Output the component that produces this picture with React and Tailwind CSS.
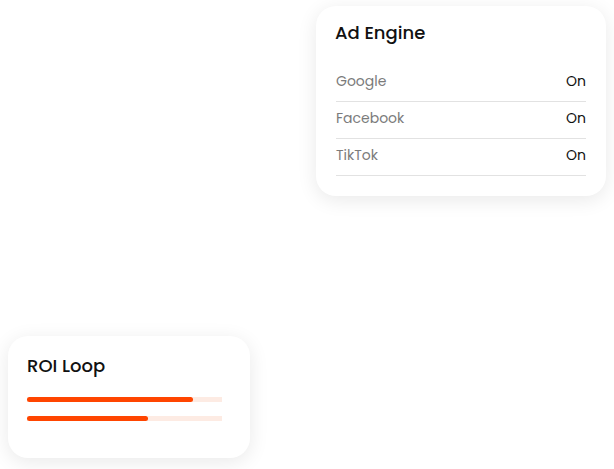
export default function App() {
  const rows = [
    { name: "Google", value: "On" },
    { name: "Facebook", value: "On" },
    { name: "TikTok", value: "On" },
  ];

  return (
    <div
      className="w-[614px] h-[469px] bg-white flex flex-col"
      style={{ fontFamily: "Poppins, Inter, 'Noto Sans', sans-serif" }}
    >
      <div className="flex justify-end pr-[8px] pt-[6px]">
        {/* Ad Engine card */}
        <div className="w-[290px] h-[190px] rounded-[20px] bg-white shadow-[0_4px_20px_rgba(0,0,0,0.09)] pl-[19px] pr-[20px] pt-[13px]">
          <h3 className="text-[18px] leading-[28px] font-medium text-[#111]">
            Ad Engine
          </h3>
          <div className="mt-[18px] pl-[1px]">
            {rows.map((r) => (
              <div
                key={r.name}
                className="flex justify-between items-center pt-[6px] pb-[10px] border-b border-[#e2e2e2] text-[14px] leading-[20px]"
              >
                <span className="text-[#7b7b7b]">{r.name}</span>
                <span className="text-[#111]">{r.value}</span>
              </div>
            ))}
          </div>
        </div>
      </div>

      <div className="pl-[8px] mt-[140px]">
        {/* ROI Loop card */}
        <div className="w-[242px] h-[122px] rounded-[20px] bg-white shadow-[0_4px_20px_rgba(0,0,0,0.09)] pl-[19px] pt-[16px]">
          <h3 className="text-[18px] leading-[28px] font-medium text-[#111]">
            ROI Loop
          </h3>
          <div className="mt-[17px] flex flex-col gap-[14px] w-[195px]">
            <div className="h-[5px] bg-[#fdebe3]">
              <div className="h-full w-[85%] rounded-full bg-[#ff4500]" />
            </div>
            <div className="h-[5px] bg-[#fdebe3]">
              <div className="h-full w-[62%] rounded-full bg-[#ff4500]" />
            </div>
          </div>
        </div>
      </div>
    </div>
  );
}
